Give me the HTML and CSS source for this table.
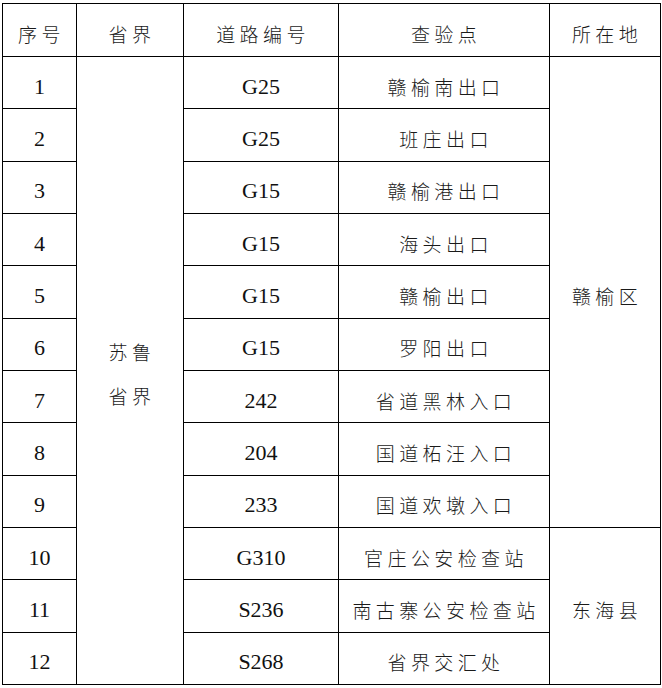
FILE: index.html
```html
<!DOCTYPE html>
<html lang="zh">
<head>
<meta charset="utf-8">
<link rel="stylesheet" href="styles.css">
</head>
<body>
<table class="grid">
  <colgroup>
    <col class="c1"><col class="c2"><col class="c3"><col class="c4"><col class="c5">
  </colgroup>
  <thead>
    <tr class="head">
      <th>序号</th><th>省界</th><th>道路编号</th><th>查验点</th><th>所在地</th>
    </tr>
  </thead>
  <tbody>
    <tr><td class="num">1</td><td class="prov" rowspan="12">苏鲁<br>省界</td><td class="num">G25</td><td>赣榆南出口</td><td rowspan="9">赣榆区</td></tr>
    <tr><td class="num">2</td><td class="num">G25</td><td>班庄出口</td></tr>
    <tr><td class="num">3</td><td class="num">G15</td><td>赣榆港出口</td></tr>
    <tr><td class="num">4</td><td class="num">G15</td><td>海头出口</td></tr>
    <tr><td class="num">5</td><td class="num">G15</td><td>赣榆出口</td></tr>
    <tr><td class="num">6</td><td class="num">G15</td><td>罗阳出口</td></tr>
    <tr><td class="num">7</td><td class="num">242</td><td>省道黑林入口</td></tr>
    <tr><td class="num">8</td><td class="num">204</td><td>国道柘汪入口</td></tr>
    <tr><td class="num">9</td><td class="num">233</td><td>国道欢墩入口</td></tr>
    <tr><td class="num">10</td><td class="num">G310</td><td>官庄公安检查站</td><td rowspan="3">东海县</td></tr>
    <tr><td class="num">11</td><td class="num">S236</td><td>南古寨公安检查站</td></tr>
    <tr><td class="num">12</td><td class="num">S268</td><td>省界交汇处</td></tr>
  </tbody>
</table>
</body>
</html>
```
FILE: styles.css
```css
html, body {
  margin: 0;
  padding: 0;
  background: #fff;
}
body {
  padding: 3px 0 0 2px;
}
.grid {
  border-collapse: collapse;
  table-layout: fixed;
  width: 658px;
  font-family: "Noto Sans CJK SC", "Noto Sans CJK JP", sans-serif;
  font-size: 19px;
  font-weight: 300;
  color: #1a1a1a;
}
.c1 { width: 74px; }
.c2 { width: 107px; }
.c3 { width: 155px; }
.c4 { width: 211px; }
.c5 { width: 111px; }
.grid th, .grid td {
  border: 1px solid #000;
  text-align: center;
  vertical-align: middle;
  padding: 8px 0 0 4px;
  letter-spacing: 4.4px;
  font-weight: 300;
  line-height: 24px;
}
.head th {
  height: 44px;
}
.grid tbody td {
  height: 43.33px;
}
.grid td.num {
  font-family: "Liberation Serif", "Times New Roman", serif;
  font-size: 22px;
  font-weight: 400;
  letter-spacing: 0;
  padding-left: 0;
  color: #111;
}
.grid td.prov {
  line-height: 44px;
}
```
